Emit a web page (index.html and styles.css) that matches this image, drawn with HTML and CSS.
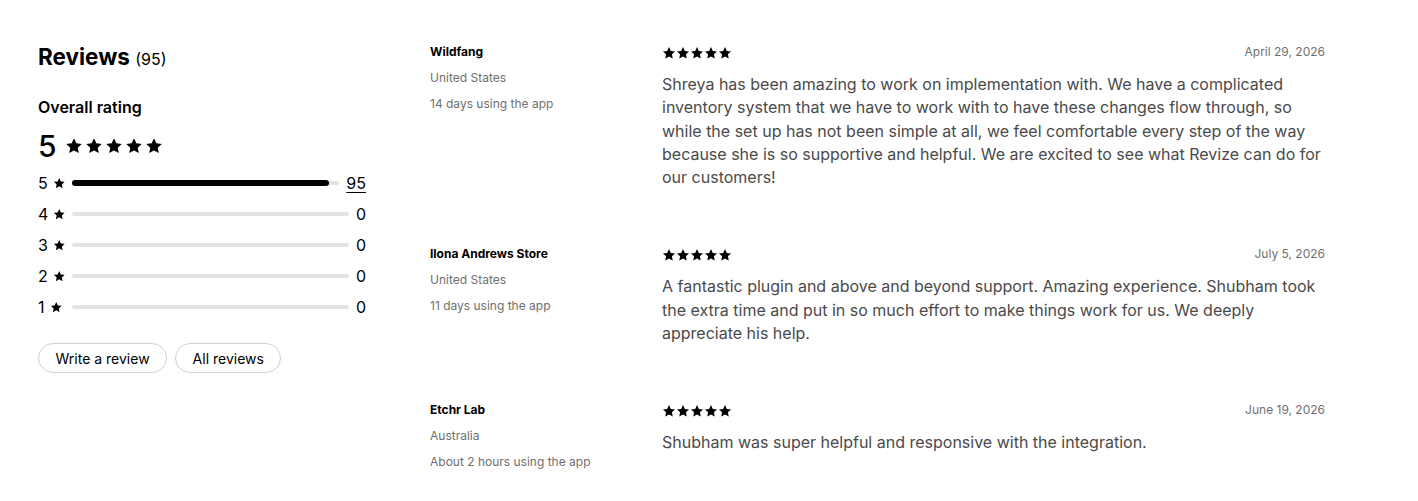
FILE: index.html
```html
<!DOCTYPE html>
<html lang="en">
<head>
  <meta charset="UTF-8">
  <meta name="viewport" content="width=device-width, initial-scale=1.0">
  <title>Reviews</title>
  <link rel="stylesheet" href="styles.css">
</head>
<body>
  <!-- shared star shape -->
  <svg width="0" height="0" class="defs">
    <symbol id="star" viewBox="0 0 24 24">
      <path d="M12 1.8l3.1 6.6 7.2.9-5.3 5 1.4 7.1L12 17.9l-6.4 3.5 1.4-7.1-5.3-5 7.2-.9z"/>
    </symbol>
  </svg>

  <div class="page">
    <!-- Summary column -->
    <aside class="summary">
      <h2 class="title">Reviews <span class="count">(95)</span></h2>
      <h3 class="overall-label">Overall rating</h3>
      <div class="overall">
        <span class="overall-value">5</span>
        <span class="stars stars-lg">
          <svg><use href="#star"/></svg><svg><use href="#star"/></svg><svg><use href="#star"/></svg><svg><use href="#star"/></svg><svg><use href="#star"/></svg>
        </span>
      </div>

      <ul class="breakdown">
        <li class="row">
          <span class="row-label">5 <svg class="row-star"><use href="#star"/></svg></span>
          <span class="track"><span class="fill" style="width: 96%"></span></span>
          <a class="row-count link" href="#">95</a>
        </li>
        <li class="row">
          <span class="row-label">4 <svg class="row-star"><use href="#star"/></svg></span>
          <span class="track"></span>
          <span class="row-count">0</span>
        </li>
        <li class="row">
          <span class="row-label">3 <svg class="row-star"><use href="#star"/></svg></span>
          <span class="track"></span>
          <span class="row-count">0</span>
        </li>
        <li class="row">
          <span class="row-label">2 <svg class="row-star"><use href="#star"/></svg></span>
          <span class="track"></span>
          <span class="row-count">0</span>
        </li>
        <li class="row">
          <span class="row-label">1 <svg class="row-star"><use href="#star"/></svg></span>
          <span class="track"></span>
          <span class="row-count">0</span>
        </li>
      </ul>

      <div class="actions">
        <button class="pill">Write a review</button>
        <button class="pill">All reviews</button>
      </div>
    </aside>

    <!-- Review list -->
    <section class="reviews">
      <article class="review">
        <div class="meta">
          <div class="store">Wildfang</div>
          <div class="info">United States</div>
          <div class="info">14 days using the app</div>
        </div>
        <div class="content">
          <div class="content-head">
            <span class="stars stars-sm">
              <svg><use href="#star"/></svg><svg><use href="#star"/></svg><svg><use href="#star"/></svg><svg><use href="#star"/></svg><svg><use href="#star"/></svg>
            </span>
            <span class="date">April 29, 2026</span>
          </div>
          <p class="text">Shreya has been amazing to work on implementation with. We have a complicated inventory system that we have to work with to have these changes flow through, so while the set up has not been simple at all, we feel comfortable every step of the way because she is so supportive and helpful. We are excited to see what Revize can do for our customers!</p>
        </div>
      </article>

      <article class="review">
        <div class="meta">
          <div class="store">Ilona Andrews Store</div>
          <div class="info">United States</div>
          <div class="info">11 days using the app</div>
        </div>
        <div class="content">
          <div class="content-head">
            <span class="stars stars-sm">
              <svg><use href="#star"/></svg><svg><use href="#star"/></svg><svg><use href="#star"/></svg><svg><use href="#star"/></svg><svg><use href="#star"/></svg>
            </span>
            <span class="date">July 5, 2026</span>
          </div>
          <p class="text">A fantastic plugin and above and beyond support. Amazing experience. Shubham took the extra time and put in so much effort to make things work for us. We deeply appreciate his help.</p>
        </div>
      </article>

      <article class="review">
        <div class="meta">
          <div class="store">Etchr Lab</div>
          <div class="info">Australia</div>
          <div class="info">About 2 hours using the app</div>
        </div>
        <div class="content">
          <div class="content-head">
            <span class="stars stars-sm">
              <svg><use href="#star"/></svg><svg><use href="#star"/></svg><svg><use href="#star"/></svg><svg><use href="#star"/></svg><svg><use href="#star"/></svg>
            </span>
            <span class="date">June 19, 2026</span>
          </div>
          <p class="text">Shubham was super helpful and responsive with the integration.</p>
        </div>
      </article>
    </section>
  </div>
</body>
</html>
```

FILE: styles.css
```css
body {
  margin: 0;
  font-family: Inter, "Noto Sans", Arial, sans-serif;
  color: #000;
  background: #fff;
}

.defs {
  position: absolute;
}

.page {
  display: grid;
  grid-template-columns: 328px 1fr;
  column-gap: 64px;
  padding: 40px 93px 0 38px;
}

/* summary */
.title {
  margin: 0;
  font-size: 22.5px;
  line-height: 34px;
  font-weight: 700;
}

.count {
  font-size: 16px;
  font-weight: 400;
}

.overall-label {
  margin: 21px 0 0;
  font-size: 16px;
  line-height: 20px;
  font-weight: 600;
}

.overall {
  display: flex;
  align-items: center;
  gap: 8px;
  margin-top: 11px;
}

.overall-value {
  font-size: 30px;
  line-height: 36px;
  font-weight: 500;
}

.stars {
  display: inline-flex;
}

.stars svg {
  fill: #000;
}

.stars-lg {
  gap: 2px;
}

.stars-lg svg {
  width: 18px;
  height: 18px;
}

.stars-sm svg {
  width: 14px;
  height: 14px;
}

.breakdown {
  list-style: none;
  margin: 3px 0 0;
  padding: 0;
}

.row {
  display: flex;
  align-items: center;
  height: 31px;
  font-size: 16px;
}

.row-label {
  display: inline-flex;
  align-items: center;
  gap: 5px;
  width: 34px;
}

.row-star {
  width: 12.5px;
  height: 12.5px;
  fill: #000;
  margin-top: 2px;
}

.track {
  flex: 1;
  height: 4px;
  background: #e3e3e3;
  border-radius: 2px;
  display: flex;
  align-items: center;
  margin-right: 7px;
}

.fill {
  height: 6px;
  background: #000;
  border-radius: 3px;
}

.row-count {
  min-width: 10px;
  text-align: right;
  color: #000;
}

.link {
  text-decoration: underline;
  text-underline-offset: 3px;
  text-decoration-thickness: 1px;
}

.actions {
  display: flex;
  gap: 8px;
  margin-top: 21px;
}

.pill {
  font-family: inherit;
  font-size: 14px;
  color: #000;
  background: #fff;
  border: 1px solid #d0d0d0;
  border-radius: 16px;
  padding: 0 16.5px;
  height: 30px;
  cursor: pointer;
}

/* reviews */
.review {
  display: grid;
  grid-template-columns: 232px 1fr;
  margin-bottom: 53px;
}

.store {
  font-size: 12px;
  line-height: 16px;
  font-weight: 700;
  margin-top: 4px;
}

.info {
  font-size: 12px;
  line-height: 16px;
  color: #6f6f6f;
  margin-top: 10px;
}

.content-head {
  display: flex;
  justify-content: space-between;
  align-items: center;
  height: 25px;
}

.date {
  font-size: 12px;
  color: #6f6f6f;
  margin-top: -2px;
}

.text {
  margin: 8px 0 0;
  font-size: 16px;
  line-height: 23.3px;
  color: #4a4a4a;
}
```
